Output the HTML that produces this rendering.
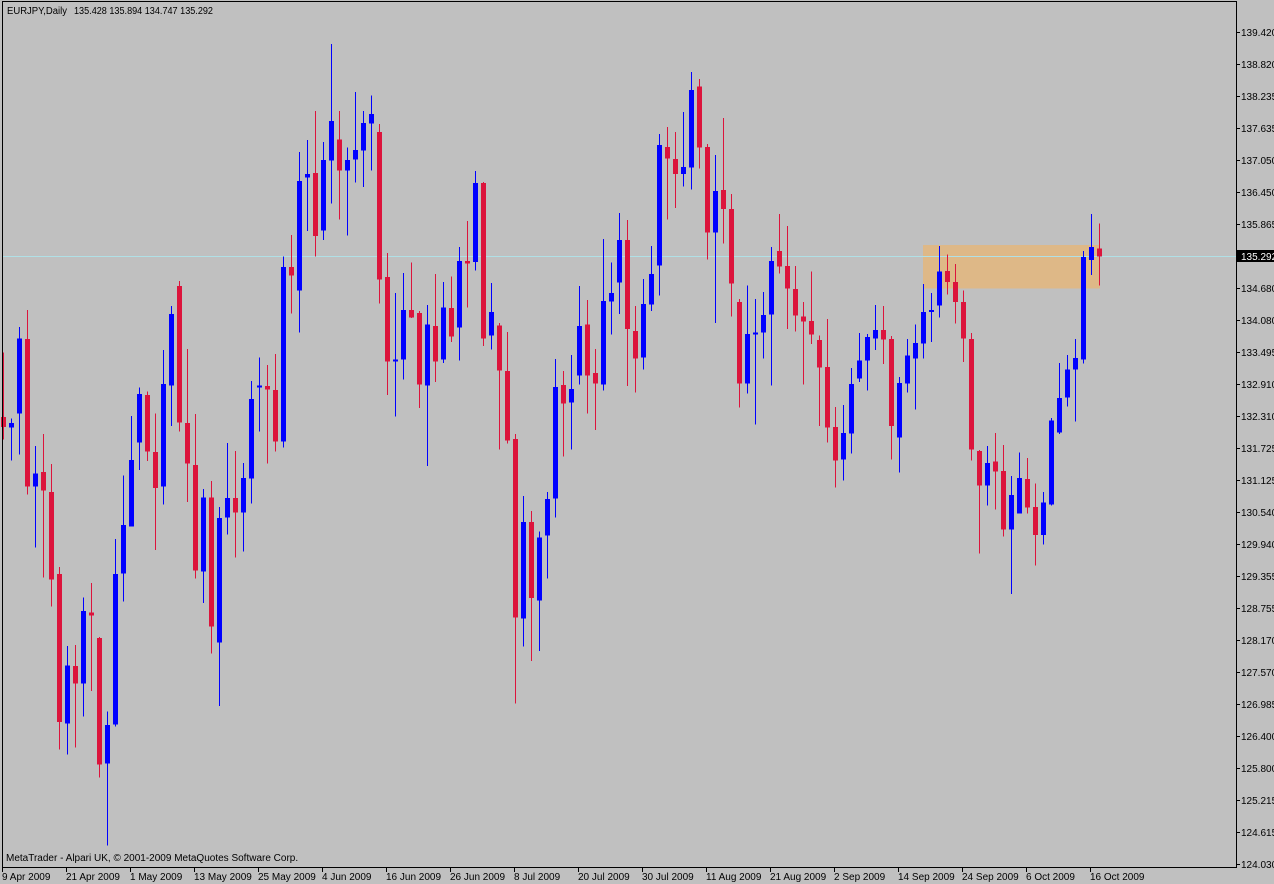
<!DOCTYPE html>
<html><head><meta charset="utf-8"><style>
html,body{margin:0;padding:0;background:#c0c0c0;width:1274px;height:884px;overflow:hidden}
svg{position:absolute;left:0;top:0}
text{font-family:"Liberation Sans",sans-serif;font-size:10px;fill:#000}
.r{fill:#dc143c}.b{fill:#0000ff}
</style></head><body>
<svg width="1274" height="884" viewBox="0 0 1274 884" shape-rendering="crispEdges">
<rect x="0" y="0" width="1274" height="884" fill="#c0c0c0"/>
<g transform="scale(1,0.56378)">
<rect x="923" y="435" width="177" height="77" fill="#deb887"/>
</g>
<rect x="2" y="256" width="1234" height="1" fill="#b0e0e6"/>
<g transform="scale(1,0.56378)">
<rect class="r" x="3" y="625" width="1" height="155"/><rect class="r" x="1" y="740" width="5" height="17"/>
<rect class="b" x="11" y="742" width="1" height="75"/><rect class="b" x="9" y="750" width="5" height="8"/>
<rect class="b" x="19" y="580" width="1" height="226"/><rect class="b" x="17" y="600" width="5" height="133"/>
<rect class="r" x="27" y="550" width="1" height="327"/><rect class="r" x="25" y="601" width="5" height="262"/>
<rect class="b" x="35" y="791" width="1" height="180"/><rect class="b" x="33" y="840" width="5" height="23"/>
<rect class="r" x="43" y="770" width="1" height="254"/><rect class="r" x="41" y="837" width="5" height="33"/>
<rect class="r" x="51" y="823" width="1" height="253"/><rect class="r" x="49" y="873" width="5" height="155"/>
<rect class="r" x="59" y="1006" width="1" height="323"/><rect class="r" x="57" y="1018" width="5" height="263"/>
<rect class="b" x="67" y="1146" width="1" height="192"/><rect class="b" x="65" y="1180" width="5" height="103"/>
<rect class="r" x="75" y="1144" width="1" height="182"/><rect class="r" x="73" y="1181" width="5" height="31"/>
<rect class="b" x="83" y="1060" width="1" height="211"/><rect class="b" x="81" y="1084" width="5" height="128"/>
<rect class="r" x="91" y="1034" width="1" height="192"/><rect class="r" x="89" y="1086" width="5" height="6"/>
<rect class="r" x="99" y="1130" width="1" height="249"/><rect class="r" x="97" y="1132" width="5" height="224"/>
<rect class="b" x="107" y="1262" width="1" height="238"/><rect class="b" x="105" y="1286" width="5" height="68"/>
<rect class="b" x="115" y="956" width="1" height="333"/><rect class="b" x="113" y="1018" width="5" height="267"/>
<rect class="b" x="123" y="843" width="1" height="224"/><rect class="b" x="121" y="931" width="5" height="86"/>
<rect class="b" x="131" y="738" width="1" height="196"/><rect class="b" x="129" y="816" width="5" height="118"/>
<rect class="b" x="139" y="687" width="1" height="147"/><rect class="b" x="137" y="699" width="5" height="86"/>
<rect class="r" x="147" y="694" width="1" height="124"/><rect class="r" x="145" y="701" width="5" height="100"/>
<rect class="r" x="155" y="733" width="1" height="243"/><rect class="r" x="153" y="802" width="5" height="64"/>
<rect class="b" x="163" y="621" width="1" height="274"/><rect class="b" x="161" y="681" width="5" height="182"/>
<rect class="b" x="171" y="543" width="1" height="213"/><rect class="b" x="169" y="557" width="5" height="127"/>
<rect class="r" x="179" y="498" width="1" height="267"/><rect class="r" x="177" y="507" width="5" height="242"/>
<rect class="r" x="187" y="619" width="1" height="271"/><rect class="r" x="185" y="750" width="5" height="72"/>
<rect class="r" x="195" y="734" width="1" height="292"/><rect class="r" x="193" y="825" width="5" height="187"/>
<rect class="b" x="203" y="867" width="1" height="203"/><rect class="b" x="201" y="882" width="5" height="132"/>
<rect class="r" x="211" y="853" width="1" height="306"/><rect class="r" x="209" y="882" width="5" height="229"/>
<rect class="b" x="219" y="899" width="1" height="353"/><rect class="b" x="217" y="919" width="5" height="221"/>
<rect class="b" x="227" y="786" width="1" height="162"/><rect class="b" x="225" y="883" width="5" height="35"/>
<rect class="r" x="235" y="800" width="1" height="189"/><rect class="r" x="233" y="883" width="5" height="26"/>
<rect class="b" x="243" y="821" width="1" height="157"/><rect class="b" x="241" y="848" width="5" height="61"/>
<rect class="b" x="251" y="676" width="1" height="217"/><rect class="b" x="249" y="708" width="5" height="141"/>
<rect class="b" x="259" y="634" width="1" height="131"/><rect class="b" x="257" y="684" width="5" height="3"/>
<rect class="r" x="267" y="647" width="1" height="175"/><rect class="r" x="265" y="685" width="5" height="6"/>
<rect class="r" x="275" y="628" width="1" height="173"/><rect class="r" x="273" y="692" width="5" height="91"/>
<rect class="b" x="283" y="455" width="1" height="339"/><rect class="b" x="281" y="474" width="5" height="309"/>
<rect class="r" x="291" y="417" width="1" height="139"/><rect class="r" x="289" y="474" width="5" height="15"/>
<rect class="b" x="299" y="270" width="1" height="320"/><rect class="b" x="297" y="321" width="5" height="194"/>
<rect class="b" x="307" y="248" width="1" height="162"/><rect class="b" x="305" y="309" width="5" height="6"/>
<rect class="r" x="315" y="197" width="1" height="258"/><rect class="r" x="313" y="307" width="5" height="112"/>
<rect class="b" x="323" y="252" width="1" height="174"/><rect class="b" x="321" y="284" width="5" height="125"/>
<rect class="b" x="331" y="78" width="1" height="283"/><rect class="b" x="329" y="215" width="5" height="70"/>
<rect class="r" x="339" y="197" width="1" height="192"/><rect class="r" x="337" y="247" width="5" height="55"/>
<rect class="b" x="347" y="262" width="1" height="156"/><rect class="b" x="345" y="284" width="5" height="18"/>
<rect class="b" x="355" y="163" width="1" height="161"/><rect class="b" x="353" y="266" width="5" height="17"/>
<rect class="b" x="363" y="197" width="1" height="135"/><rect class="b" x="361" y="218" width="5" height="49"/>
<rect class="b" x="371" y="169" width="1" height="133"/><rect class="b" x="369" y="202" width="5" height="17"/>
<rect class="r" x="379" y="220" width="1" height="318"/><rect class="r" x="377" y="234" width="5" height="262"/>
<rect class="r" x="387" y="449" width="1" height="252"/><rect class="r" x="385" y="491" width="5" height="150"/>
<rect class="b" x="395" y="520" width="1" height="219"/><rect class="b" x="393" y="638" width="5" height="3"/>
<rect class="b" x="403" y="484" width="1" height="189"/><rect class="b" x="401" y="550" width="5" height="88"/>
<rect class="r" x="411" y="466" width="1" height="98"/><rect class="r" x="409" y="550" width="5" height="13"/>
<rect class="r" x="419" y="552" width="1" height="172"/><rect class="r" x="417" y="555" width="5" height="127"/>
<rect class="b" x="427" y="541" width="1" height="286"/><rect class="b" x="425" y="576" width="5" height="108"/>
<rect class="r" x="435" y="486" width="1" height="192"/><rect class="r" x="433" y="578" width="5" height="63"/>
<rect class="b" x="443" y="500" width="1" height="144"/><rect class="b" x="441" y="545" width="5" height="93"/>
<rect class="r" x="451" y="490" width="1" height="117"/><rect class="r" x="449" y="546" width="5" height="51"/>
<rect class="b" x="459" y="438" width="1" height="201"/><rect class="b" x="457" y="463" width="5" height="118"/>
<rect class="r" x="467" y="392" width="1" height="153"/><rect class="r" x="465" y="463" width="5" height="4"/>
<rect class="b" x="475" y="303" width="1" height="177"/><rect class="b" x="473" y="325" width="5" height="140"/>
<rect class="r" x="483" y="323" width="1" height="291"/><rect class="r" x="481" y="325" width="5" height="275"/>
<rect class="b" x="491" y="502" width="1" height="118"/><rect class="b" x="489" y="553" width="5" height="42"/>
<rect class="r" x="499" y="573" width="1" height="224"/><rect class="r" x="497" y="577" width="5" height="80"/>
<rect class="r" x="507" y="589" width="1" height="198"/><rect class="r" x="505" y="658" width="5" height="123"/>
<rect class="r" x="515" y="770" width="1" height="478"/><rect class="r" x="513" y="779" width="5" height="316"/>
<rect class="b" x="523" y="880" width="1" height="267"/><rect class="b" x="521" y="926" width="5" height="171"/>
<rect class="r" x="531" y="906" width="1" height="266"/><rect class="r" x="529" y="926" width="5" height="135"/>
<rect class="b" x="539" y="943" width="1" height="212"/><rect class="b" x="537" y="953" width="5" height="112"/>
<rect class="b" x="547" y="873" width="1" height="153"/><rect class="b" x="545" y="885" width="5" height="65"/>
<rect class="b" x="555" y="637" width="1" height="281"/><rect class="b" x="553" y="686" width="5" height="198"/>
<rect class="r" x="563" y="658" width="1" height="152"/><rect class="r" x="561" y="683" width="5" height="33"/>
<rect class="b" x="571" y="630" width="1" height="167"/><rect class="b" x="569" y="690" width="5" height="24"/>
<rect class="b" x="579" y="507" width="1" height="175"/><rect class="b" x="577" y="578" width="5" height="88"/>
<rect class="r" x="587" y="532" width="1" height="201"/><rect class="r" x="585" y="576" width="5" height="90"/>
<rect class="r" x="595" y="619" width="1" height="144"/><rect class="r" x="593" y="662" width="5" height="18"/>
<rect class="b" x="603" y="424" width="1" height="269"/><rect class="b" x="601" y="534" width="5" height="148"/>
<rect class="b" x="611" y="466" width="1" height="127"/><rect class="b" x="609" y="520" width="5" height="15"/>
<rect class="b" x="619" y="378" width="1" height="179"/><rect class="b" x="617" y="426" width="5" height="75"/>
<rect class="r" x="627" y="390" width="1" height="295"/><rect class="r" x="625" y="426" width="5" height="158"/>
<rect class="r" x="635" y="543" width="1" height="153"/><rect class="r" x="633" y="587" width="5" height="49"/>
<rect class="b" x="643" y="495" width="1" height="160"/><rect class="b" x="641" y="539" width="5" height="95"/>
<rect class="b" x="651" y="436" width="1" height="116"/><rect class="b" x="649" y="486" width="5" height="54"/>
<rect class="b" x="659" y="238" width="1" height="286"/><rect class="b" x="657" y="257" width="5" height="214"/>
<rect class="r" x="667" y="225" width="1" height="164"/><rect class="r" x="665" y="261" width="5" height="20"/>
<rect class="r" x="675" y="234" width="1" height="135"/><rect class="r" x="673" y="282" width="5" height="27"/>
<rect class="b" x="683" y="199" width="1" height="132"/><rect class="b" x="681" y="296" width="5" height="13"/>
<rect class="b" x="691" y="128" width="1" height="208"/><rect class="b" x="689" y="160" width="5" height="137"/>
<rect class="r" x="699" y="140" width="1" height="159"/><rect class="r" x="697" y="153" width="5" height="109"/>
<rect class="r" x="707" y="255" width="1" height="205"/><rect class="r" x="705" y="261" width="5" height="151"/>
<rect class="b" x="715" y="275" width="1" height="298"/><rect class="b" x="713" y="339" width="5" height="73"/>
<rect class="r" x="723" y="209" width="1" height="223"/><rect class="r" x="721" y="337" width="5" height="34"/>
<rect class="r" x="731" y="344" width="1" height="217"/><rect class="r" x="729" y="371" width="5" height="132"/>
<rect class="r" x="739" y="530" width="1" height="193"/><rect class="r" x="737" y="536" width="5" height="144"/>
<rect class="b" x="747" y="506" width="1" height="192"/><rect class="b" x="745" y="592" width="5" height="88"/>
<rect class="b" x="755" y="530" width="1" height="223"/><rect class="b" x="753" y="590" width="5" height="3"/>
<rect class="b" x="763" y="518" width="1" height="118"/><rect class="b" x="761" y="559" width="5" height="31"/>
<rect class="b" x="771" y="438" width="1" height="246"/><rect class="b" x="769" y="463" width="5" height="95"/>
<rect class="r" x="779" y="380" width="1" height="105"/><rect class="r" x="777" y="445" width="5" height="28"/>
<rect class="r" x="787" y="401" width="1" height="183"/><rect class="r" x="785" y="472" width="5" height="40"/>
<rect class="r" x="795" y="472" width="1" height="116"/><rect class="r" x="793" y="513" width="5" height="47"/>
<rect class="r" x="803" y="536" width="1" height="146"/><rect class="r" x="801" y="561" width="5" height="9"/>
<rect class="r" x="811" y="482" width="1" height="128"/><rect class="r" x="809" y="569" width="5" height="24"/>
<rect class="r" x="819" y="595" width="1" height="161"/><rect class="r" x="817" y="603" width="5" height="49"/>
<rect class="r" x="827" y="566" width="1" height="219"/><rect class="r" x="825" y="651" width="5" height="107"/>
<rect class="r" x="835" y="722" width="1" height="143"/><rect class="r" x="833" y="757" width="5" height="60"/>
<rect class="b" x="843" y="718" width="1" height="134"/><rect class="b" x="841" y="768" width="5" height="47"/>
<rect class="b" x="851" y="653" width="1" height="151"/><rect class="b" x="849" y="681" width="5" height="88"/>
<rect class="b" x="859" y="591" width="1" height="87"/><rect class="b" x="857" y="639" width="5" height="32"/>
<rect class="b" x="867" y="592" width="1" height="101"/><rect class="b" x="865" y="598" width="5" height="41"/>
<rect class="b" x="875" y="541" width="1" height="80"/><rect class="b" x="873" y="585" width="5" height="15"/>
<rect class="r" x="883" y="543" width="1" height="103"/><rect class="r" x="881" y="585" width="5" height="17"/>
<rect class="r" x="891" y="596" width="1" height="219"/><rect class="r" x="889" y="601" width="5" height="155"/>
<rect class="b" x="899" y="669" width="1" height="169"/><rect class="b" x="897" y="679" width="5" height="97"/>
<rect class="b" x="907" y="601" width="1" height="95"/><rect class="b" x="905" y="631" width="5" height="49"/>
<rect class="b" x="915" y="576" width="1" height="150"/><rect class="b" x="913" y="608" width="5" height="28"/>
<rect class="b" x="923" y="504" width="1" height="132"/><rect class="b" x="921" y="553" width="5" height="56"/>
<rect class="b" x="931" y="520" width="1" height="87"/><rect class="b" x="929" y="550" width="5" height="3"/>
<rect class="b" x="939" y="436" width="1" height="127"/><rect class="b" x="937" y="482" width="5" height="60"/>
<rect class="r" x="947" y="451" width="1" height="71"/><rect class="r" x="945" y="481" width="5" height="19"/>
<rect class="r" x="955" y="468" width="1" height="106"/><rect class="r" x="953" y="500" width="5" height="36"/>
<rect class="r" x="963" y="515" width="1" height="127"/><rect class="r" x="961" y="536" width="5" height="64"/>
<rect class="r" x="971" y="591" width="1" height="226"/><rect class="r" x="969" y="601" width="5" height="196"/>
<rect class="r" x="979" y="798" width="1" height="184"/><rect class="r" x="977" y="800" width="5" height="61"/>
<rect class="b" x="987" y="791" width="1" height="106"/><rect class="b" x="985" y="821" width="5" height="40"/>
<rect class="r" x="995" y="768" width="1" height="136"/><rect class="r" x="993" y="819" width="5" height="17"/>
<rect class="r" x="1003" y="789" width="1" height="163"/><rect class="r" x="1001" y="835" width="5" height="104"/>
<rect class="b" x="1011" y="844" width="1" height="210"/><rect class="b" x="1009" y="878" width="5" height="61"/>
<rect class="b" x="1019" y="803" width="1" height="108"/><rect class="b" x="1017" y="848" width="5" height="63"/>
<rect class="r" x="1027" y="812" width="1" height="99"/><rect class="r" x="1025" y="850" width="5" height="50"/>
<rect class="r" x="1035" y="858" width="1" height="145"/><rect class="r" x="1033" y="899" width="5" height="50"/>
<rect class="b" x="1043" y="873" width="1" height="93"/><rect class="b" x="1041" y="891" width="5" height="58"/>
<rect class="b" x="1051" y="741" width="1" height="156"/><rect class="b" x="1049" y="746" width="5" height="149"/>
<rect class="b" x="1059" y="644" width="1" height="126"/><rect class="b" x="1057" y="706" width="5" height="61"/>
<rect class="b" x="1067" y="630" width="1" height="91"/><rect class="b" x="1065" y="655" width="5" height="50"/>
<rect class="b" x="1075" y="601" width="1" height="147"/><rect class="b" x="1073" y="635" width="5" height="20"/>
<rect class="b" x="1083" y="445" width="1" height="200"/><rect class="b" x="1081" y="456" width="5" height="182"/>
<rect class="b" x="1091" y="380" width="1" height="108"/><rect class="b" x="1089" y="438" width="5" height="23"/>
<rect class="r" x="1099" y="396" width="1" height="110"/><rect class="r" x="1097" y="441" width="5" height="14"/>
</g>
<rect x="2" y="1" width="1235" height="1" fill="#000"/>
<rect x="2" y="1" width="1" height="867" fill="#000"/>
<rect x="1236" y="1" width="1" height="867" fill="#000"/>
<rect x="2" y="867" width="1235" height="1" fill="#000"/>
<text x="7" y="14" textLength="60" lengthAdjust="spacingAndGlyphs">EURJPY,Daily</text>
<text x="74" y="14" textLength="139" lengthAdjust="spacingAndGlyphs">135.428 135.894 134.747 135.292</text>
<text x="6" y="861">MetaTrader - Alpari UK, © 2001-2009 MetaQuotes Software Corp.</text>
<g fill="#000">
<rect x="1237" y="32" width="3" height="1"/><rect x="1237" y="64" width="3" height="1"/><rect x="1237" y="96" width="3" height="1"/><rect x="1237" y="128" width="3" height="1"/><rect x="1237" y="160" width="3" height="1"/><rect x="1237" y="192" width="3" height="1"/><rect x="1237" y="224" width="3" height="1"/><rect x="1237" y="288" width="3" height="1"/><rect x="1237" y="320" width="3" height="1"/><rect x="1237" y="352" width="3" height="1"/><rect x="1237" y="384" width="3" height="1"/><rect x="1237" y="416" width="3" height="1"/><rect x="1237" y="448" width="3" height="1"/><rect x="1237" y="480" width="3" height="1"/><rect x="1237" y="512" width="3" height="1"/><rect x="1237" y="544" width="3" height="1"/><rect x="1237" y="576" width="3" height="1"/><rect x="1237" y="608" width="3" height="1"/><rect x="1237" y="640" width="3" height="1"/><rect x="1237" y="672" width="3" height="1"/><rect x="1237" y="704" width="3" height="1"/><rect x="1237" y="736" width="3" height="1"/><rect x="1237" y="768" width="3" height="1"/><rect x="1237" y="800" width="3" height="1"/><rect x="1237" y="832" width="3" height="1"/><rect x="1237" y="864" width="3" height="1"/>
</g>
<g>
<text x="1241" y="36">139.420</text><text x="1241" y="68">138.820</text><text x="1241" y="100">138.235</text><text x="1241" y="132">137.635</text><text x="1241" y="164">137.050</text><text x="1241" y="196">136.450</text><text x="1241" y="228">135.865</text>
<rect x="1237" y="250" width="37" height="12" fill="#000"/>
<text x="1241" y="260" style="fill:#fff">135.292</text>
<text x="1241" y="292">134.680</text><text x="1241" y="324">134.080</text><text x="1241" y="356">133.495</text><text x="1241" y="388">132.910</text><text x="1241" y="420">132.310</text><text x="1241" y="452">131.725</text><text x="1241" y="484">131.125</text><text x="1241" y="516">130.540</text><text x="1241" y="548">129.940</text><text x="1241" y="580">129.355</text><text x="1241" y="612">128.755</text><text x="1241" y="644">128.170</text><text x="1241" y="676">127.570</text><text x="1241" y="708">126.985</text><text x="1241" y="740">126.400</text><text x="1241" y="772">125.800</text><text x="1241" y="804">125.215</text><text x="1241" y="836">124.615</text><text x="1241" y="868">124.030</text>
</g>
<g fill="#000">
<rect x="2" y="868" width="1" height="4"/><rect x="66" y="868" width="1" height="4"/><rect x="130" y="868" width="1" height="4"/><rect x="194" y="868" width="1" height="4"/><rect x="258" y="868" width="1" height="4"/><rect x="322" y="868" width="1" height="4"/><rect x="386" y="868" width="1" height="4"/><rect x="450" y="868" width="1" height="4"/><rect x="514" y="868" width="1" height="4"/><rect x="578" y="868" width="1" height="4"/><rect x="642" y="868" width="1" height="4"/><rect x="706" y="868" width="1" height="4"/><rect x="770" y="868" width="1" height="4"/><rect x="834" y="868" width="1" height="4"/><rect x="898" y="868" width="1" height="4"/><rect x="962" y="868" width="1" height="4"/><rect x="1026" y="868" width="1" height="4"/><rect x="1090" y="868" width="1" height="4"/>
</g>
<g>
<text x="2" y="880">9 Apr 2009</text><text x="66" y="880">21 Apr 2009</text><text x="130" y="880">1 May 2009</text><text x="194" y="880">13 May 2009</text><text x="258" y="880">25 May 2009</text><text x="322" y="880">4 Jun 2009</text><text x="386" y="880">16 Jun 2009</text><text x="450" y="880">26 Jun 2009</text><text x="514" y="880">8 Jul 2009</text><text x="578" y="880">20 Jul 2009</text><text x="642" y="880">30 Jul 2009</text><text x="706" y="880">11 Aug 2009</text><text x="770" y="880">21 Aug 2009</text><text x="834" y="880">2 Sep 2009</text><text x="898" y="880">14 Sep 2009</text><text x="962" y="880">24 Sep 2009</text><text x="1026" y="880">6 Oct 2009</text><text x="1090" y="880">16 Oct 2009</text>
</g>
</svg>
</body></html>
